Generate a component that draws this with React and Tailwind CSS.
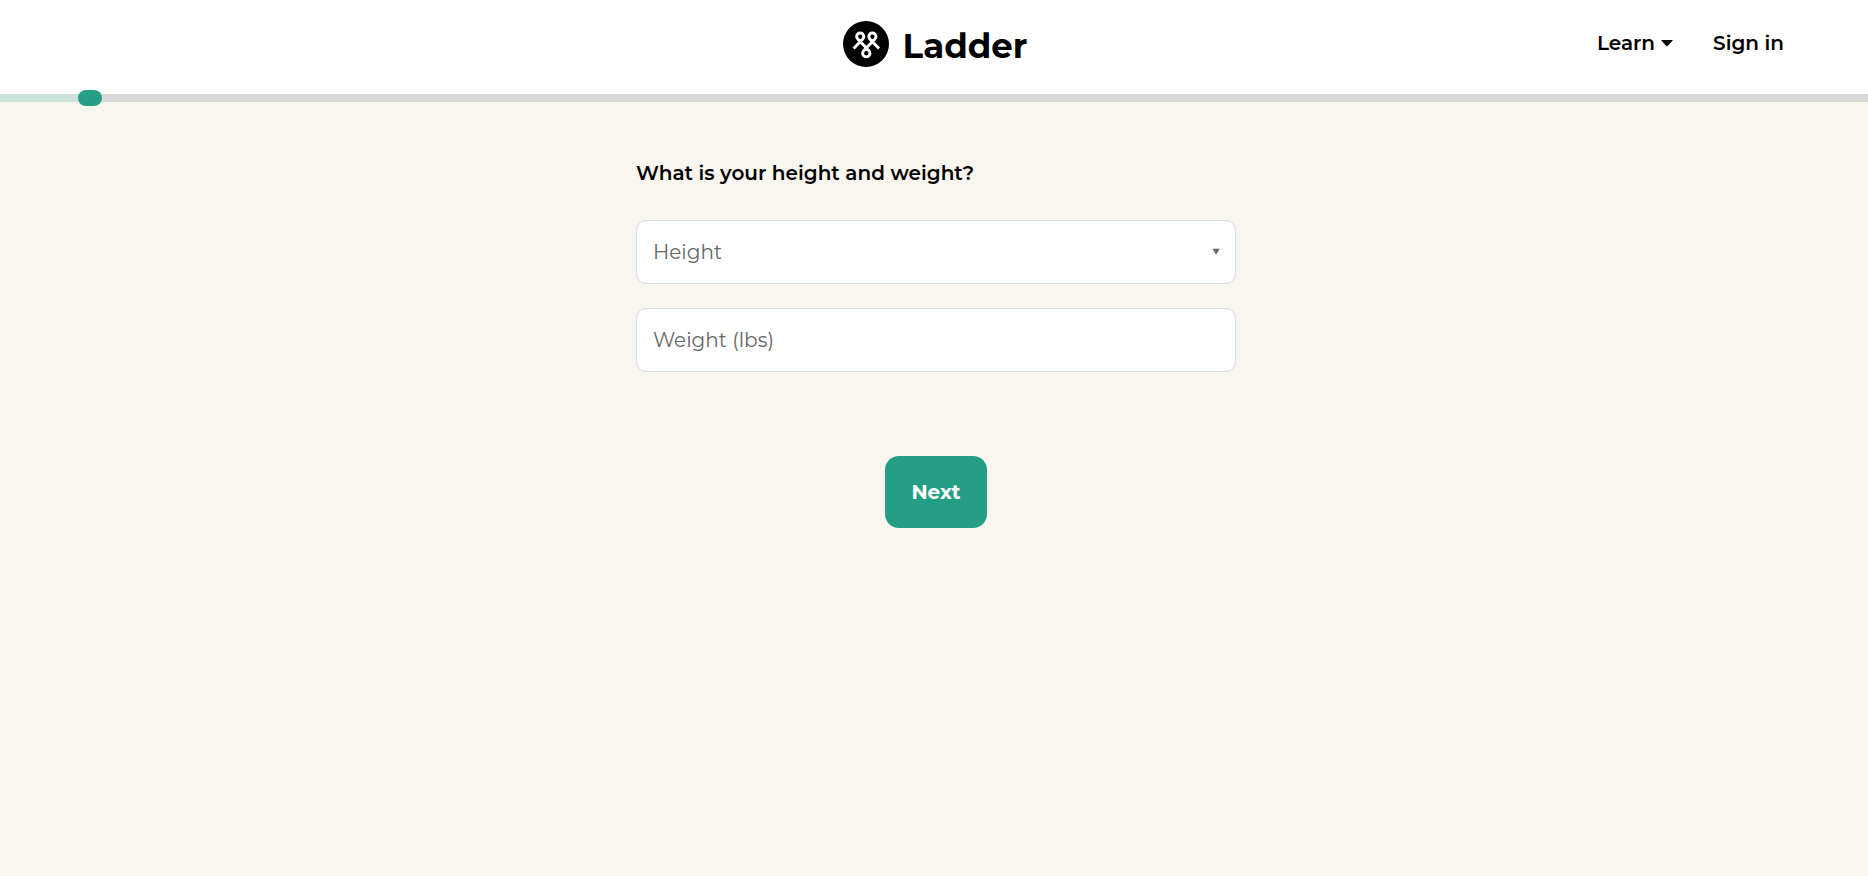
import { useState } from "react";

const heights = Array.from({ length: 37 }, (_, i) => {
  const total = 48 + i;
  return `${Math.floor(total / 12)}' ${total % 12}"`;
});

function Logo() {
  return (
    <a href="#" className="flex items-center gap-3.5 text-black">
      <svg viewBox="0 0 46 46" className="size-[46px]" aria-hidden="true">
        <circle cx="23" cy="23" r="23" fill="#000" />
        <path
          d="M10.6 27.4 L19.4 18.4 C20.6 17.2 20.8 16.4 20.8 15.6 A3.6 3.6 0 0 0 13.6 15.6 C13.6 16.4 13.9 17.2 15.1 18.4 L25.5 29.2 C26.7 30.4 27 31.3 27 32.2 A3.7 3.7 0 0 1 19.6 32.2 C19.6 31.3 19.9 30.4 21.1 29.2 L31.5 18.4 C32.7 17.2 33 16.4 33 15.6 A3.6 3.6 0 0 0 25.8 15.6 C25.8 16.4 26 17.2 27.2 18.4 L36 27.4"
          fill="none"
          stroke="#fff"
          strokeWidth="2.9"
        />
      </svg>
      <span className="pt-1 text-[34px] leading-10 font-bold">Ladder</span>
    </a>
  );
}

function Header() {
  return (
    <header className="grid h-[94px] grid-cols-[1fr_auto_1fr] items-start bg-white pt-[21px] pr-[84px] pl-[86px]">
      <div />
      <Logo />
      <nav className="flex items-center gap-10 justify-self-end pt-2 text-xl leading-7 font-semibold text-black">
        <button type="button" className="flex items-center gap-1.5">
          Learn
          <svg viewBox="0 0 12 7" className="h-[7px] w-3" aria-hidden="true">
            <path d="M0.8 0h10.4q0.8 0 0.3 0.7L6.6 6.1q-0.6 0.6-1.2 0L0.5 0.7Q0 0 0.8 0z" fill="#000" />
          </svg>
        </button>
        <a href="#">Sign in</a>
      </nav>
    </header>
  );
}

function Progress() {
  return (
    <div
      role="progressbar"
      aria-label="Application progress"
      aria-valuenow={5}
      aria-valuemin={0}
      aria-valuemax={100}
      className="flex h-2 items-center bg-[#d9d9d7]"
    >
      <div className="h-2 w-[5%] bg-[#cce3d9]" />
      <div className="-ml-[15px] h-4 w-6 shrink-0 rounded-full bg-[#259f84]" />
    </div>
  );
}

export default function App() {
  const [height, setHeight] = useState("");
  const [weight, setWeight] = useState("");

  return (
    <div className="min-h-screen bg-[#f9f6ef] font-['Montserrat','Inter',sans-serif]">
      <Header />
      <Progress />
      <main className="pt-14 pl-1">
        <form
          className="mx-auto flex w-full max-w-[600px] flex-col"
          onSubmit={(e) => e.preventDefault()}
        >
          <h1 className="mb-8 text-xl leading-[30px] font-semibold text-black">
            What is your height and weight?
          </h1>
          <div className="relative mb-6">
            <select
              aria-label="Height"
              value={height}
              onChange={(e) => setHeight(e.target.value)}
              className="h-16 w-full appearance-none rounded-[10px] border border-[#d9dbd9] bg-white px-4 text-xl text-[#666]"
            >
              <option value="">Height</option>
              {heights.map((h) => (
                <option key={h}>{h}</option>
              ))}
            </select>
            <svg
              viewBox="0 0 6 5"
              className="pointer-events-none absolute top-7 right-4 h-[7px] w-2"
              preserveAspectRatio="none"
              aria-hidden="true"
            >
              <path d="M0.4 0.6h5.4L3.1 4.8z" fill="#666" />
            </svg>
          </div>
          <input
            aria-label="Weight (lbs)"
            placeholder="Weight (lbs)"
            inputMode="numeric"
            value={weight}
            onChange={(e) => setWeight(e.target.value)}
            className="h-16 w-full rounded-[10px] border border-[#d9dbd9] bg-white px-4 text-xl text-black placeholder:text-[#666]"
          />
          <button
            type="submit"
            className="mt-21 h-18 self-center rounded-[14px] bg-[#259f84] px-[26px] text-xl font-bold text-white"
          >
            Next
          </button>
        </form>
      </main>
    </div>
  );
}
